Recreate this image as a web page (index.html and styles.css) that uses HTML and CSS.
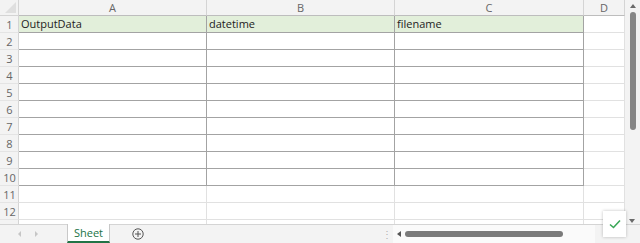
FILE: index.html
```html
<!DOCTYPE html>
<html lang="en">

<head>
    <meta charset="UTF-8" />
    <title>Sheet</title>
    <link rel="stylesheet" href="styles.css">
</head>

<body>
    <div class="app">
        <div class="main">
            <div class="grid">
                <div class="corner"><span class="tri"></span></div>
                <div class="colhead">A</div>
                <div class="colhead">B</div>
                <div class="colhead">C</div>
                <div class="colhead">D</div>

                <div class="rowhead">1</div>
                <div class="cell head b">OutputData</div>
                <div class="cell head b">datetime</div>
                <div class="cell head b">filename</div>
                <div class="cell"></div>

                <div class="rowhead">2</div><div class="cell b"></div><div class="cell b"></div><div class="cell b"></div><div class="cell"></div>
                <div class="rowhead">3</div><div class="cell b"></div><div class="cell b"></div><div class="cell b"></div><div class="cell"></div>
                <div class="rowhead">4</div><div class="cell b"></div><div class="cell b"></div><div class="cell b"></div><div class="cell"></div>
                <div class="rowhead">5</div><div class="cell b"></div><div class="cell b"></div><div class="cell b"></div><div class="cell"></div>
                <div class="rowhead">6</div><div class="cell b"></div><div class="cell b"></div><div class="cell b"></div><div class="cell"></div>
                <div class="rowhead">7</div><div class="cell b"></div><div class="cell b"></div><div class="cell b"></div><div class="cell"></div>
                <div class="rowhead">8</div><div class="cell b"></div><div class="cell b"></div><div class="cell b"></div><div class="cell"></div>
                <div class="rowhead">9</div><div class="cell b"></div><div class="cell b"></div><div class="cell b"></div><div class="cell"></div>
                <div class="rowhead">10</div><div class="cell b"></div><div class="cell b"></div><div class="cell b"></div><div class="cell"></div>
                <div class="rowhead">11</div><div class="cell"></div><div class="cell"></div><div class="cell"></div><div class="cell"></div>
                <div class="rowhead">12</div><div class="cell"></div><div class="cell"></div><div class="cell"></div><div class="cell"></div>
                <div class="rowhead">13</div><div class="cell"></div><div class="cell"></div><div class="cell"></div><div class="cell"></div>
            </div>

            <div class="vscroll">
                <span class="arrow-up"></span>
                <div class="vthumb"></div>
                <span class="arrow-down"></span>
            </div>
        </div>

        <div class="tabbar">
            <div class="nav">
                <span class="nav-left"></span>
                <span class="nav-right"></span>
            </div>
            <div class="tab">Sheet</div>
            <div class="add">
                <svg width="12" height="12" viewBox="0 0 12 12">
                    <circle cx="6" cy="6" r="5.2" fill="none" stroke="#555" stroke-width="1" />
                    <path d="M6 3 V9 M3 6 H9" stroke="#555" stroke-width="1" />
                </svg>
            </div>
            <div class="spacer"></div>
            <div class="dots">⋮</div>
            <div class="hscroll">
                <span class="arrow-left"></span>
                <div class="hthumb"></div>
            </div>
        </div>

        <div class="check">
            <svg width="12" height="10" viewBox="0 0 12 10">
                <path d="M1 5.5 L4.5 8.5 L11 1.5" fill="none" stroke="#3aa757" stroke-width="1.6" />
            </svg>
        </div>
    </div>
</body>

</html>
```

FILE: styles.css
```css
* {
    box-sizing: border-box;
}

body {
    margin: 0;
    font-family: "Open Sans", "Noto Sans", sans-serif;
    background: #ffffff;
}

.app {
    width: 640px;
    height: 243px;
    display: flex;
    flex-direction: column;
    overflow: hidden;
    position: relative;
}

.main {
    flex: 1;
    display: flex;
    overflow: hidden;
}

.grid {
    width: 625px;
    display: grid;
    grid-template-columns: 19px 188px 188px 189px 41px;
    grid-template-rows: 16px repeat(12, 17px);
    align-content: start;
}

.corner {
    background: #f3f3f3;
    border-right: 1px solid #d4d4d4;
    border-bottom: 1px solid #d4d4d4;
    position: relative;
}

.tri {
    position: absolute;
    right: 2px;
    bottom: 2px;
    width: 0;
    height: 0;
    border-left: 11px solid transparent;
    border-bottom: 11px solid #dfdfdf;
}

.colhead {
    background: #f3f3f3;
    color: #666666;
    font-size: 11px;
    text-align: center;
    line-height: 15px;
    border-right: 1px solid #d4d4d4;
    border-bottom: 1px solid #bdbdbd;
}

.rowhead {
    background: #f3f3f3;
    color: #666666;
    font-size: 11px;
    text-align: center;
    line-height: 17px;
    padding-left: 1px;
    border-right: 1px solid #d4d4d4;
    border-bottom: 1px solid #e4e4e4;
}

.cell {
    border-right: 1px solid #e1e1e1;
    border-bottom: 1px solid #e1e1e1;
    font-size: 11px;
    color: #222222;
    line-height: 16px;
    padding-left: 2px;
    white-space: nowrap;
    overflow: hidden;
}

.cell.b {
    border-right-color: #a3a3a3;
    border-bottom-color: #a3a3a3;
}

.cell.head {
    background: #e2efda;
}

.vscroll {
    width: 15px;
    background: #f3f3f3;
    position: relative;
    display: flex;
    flex-direction: column;
    align-items: center;
    padding-top: 4px;
}

.arrow-up {
    width: 0;
    height: 0;
    border-left: 3px solid transparent;
    border-right: 3px solid transparent;
    border-bottom: 4px solid #6a6a6a;
}

.vthumb {
    width: 6px;
    height: 118px;
    margin-top: 4px;
    background: #868686;
    border-radius: 3px;
}

.arrow-down {
    position: absolute;
    bottom: 1px;
    left: 4px;
    width: 0;
    height: 0;
    border-left: 3px solid transparent;
    border-right: 3px solid transparent;
    border-top: 4px solid #6a6a6a;
}

.check {
    position: absolute;
    left: 603px;
    top: 211px;
    width: 23px;
    height: 26px;
    background: #ffffff;
    box-shadow: 0 0 3px rgba(0, 0, 0, 0.25);
    display: flex;
    justify-content: center;
    align-items: center;
}

.tabbar {
    height: 19px;
    background: #f3f3f3;
    border-top: 1px solid #d4d4d4;
    display: flex;
    align-items: stretch;
    font-size: 11px;
}

.nav {
    width: 67px;
    display: flex;
    align-items: center;
    padding-left: 18px;
    gap: 14px;
}

.nav-left {
    width: 0;
    height: 0;
    border-top: 3px solid transparent;
    border-bottom: 3px solid transparent;
    border-right: 3px solid #c6c6c6;
}

.nav-right {
    width: 0;
    height: 0;
    border-top: 3px solid transparent;
    border-bottom: 3px solid transparent;
    border-left: 3px solid #c6c6c6;
}

.tab {
    width: 43px;
    margin-top: -1px;
    background: #ffffff;
    border-left: 1px solid #c8c8c8;
    border-right: 1px solid #c8c8c8;
    border-bottom: 2px solid #217346;
    color: #217346;
    text-align: center;
    line-height: 17px;
}

.add {
    width: 55px;
    display: flex;
    align-items: center;
    justify-content: center;
}

.spacer {
    flex: 1;
}

.dots {
    width: 12px;
    color: #b0b0b0;
    text-align: center;
    line-height: 18px;
    font-size: 10px;
}

.hscroll {
    width: 202px;
    margin-right: 45px;
    background: #fafafa;
    display: flex;
    align-items: center;
    padding-left: 4px;
    gap: 4px;
}

.arrow-left {
    width: 0;
    height: 0;
    border-top: 3px solid transparent;
    border-bottom: 3px solid transparent;
    border-right: 4px solid #555555;
}

.hthumb {
    width: 158px;
    height: 6px;
    background: #7a7a7a;
    border-radius: 3px;
}
```
